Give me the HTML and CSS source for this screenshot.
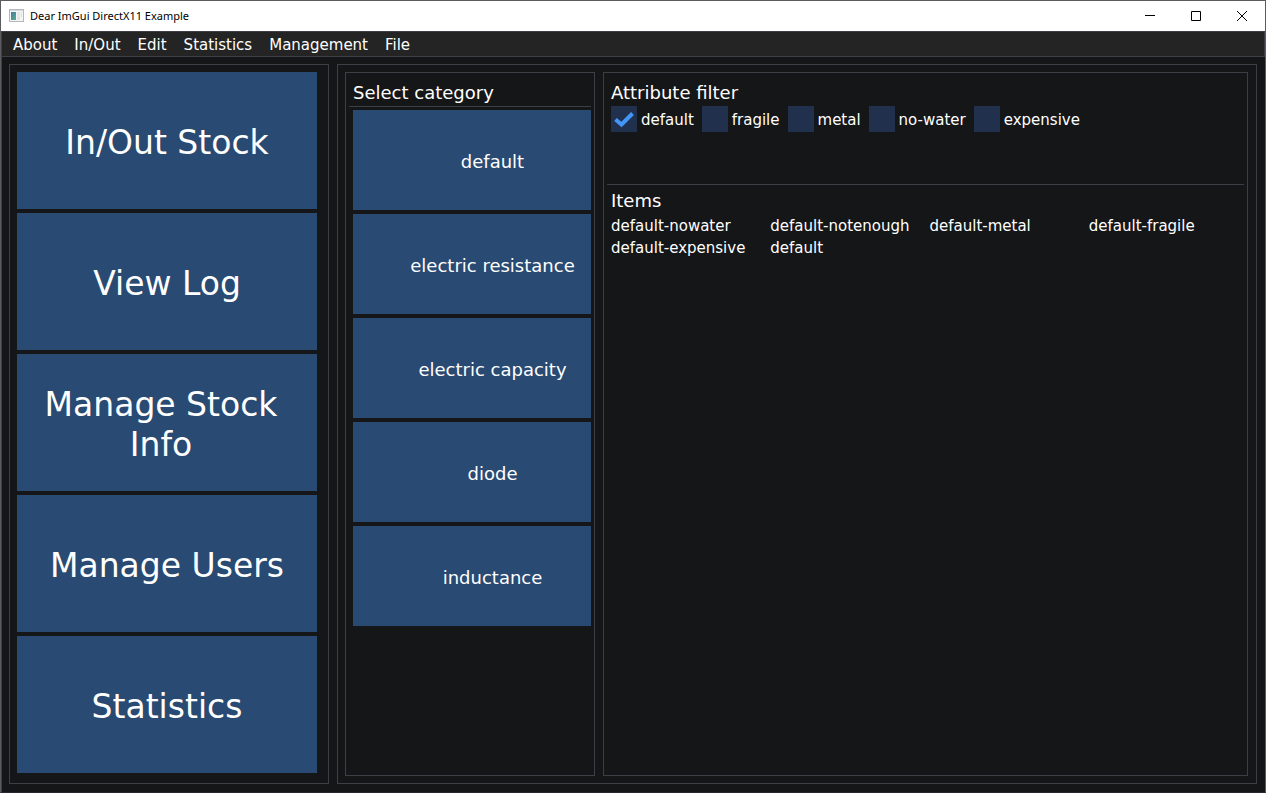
FILE: index.html
```html
<!DOCTYPE html>
<html lang="en">
<head>
<meta charset="utf-8">
<title>Dear ImGui DirectX11 Example</title>
<link rel="stylesheet" href="styles.css">
</head>
<body>
<div class="window">
  <header class="titlebar">
    <svg class="app-icon" width="15" height="13" viewBox="0 0 15 13" aria-hidden="true">
      <defs><linearGradient id="pane" x1="0" y1="0" x2="1" y2="1"><stop offset="0" stop-color="#4a78b0"/><stop offset="1" stop-color="#55b07c"/></linearGradient></defs>
      <rect x="0.5" y="0.5" width="14" height="12" fill="#f4f6f6" stroke="#b4b8bb"/>
      <path d="M1 1.5H14" stroke="#d5d9dc"/>
      <rect x="2" y="3" width="5" height="8" fill="url(#pane)"/>
      <rect x="8" y="3" width="3" height="8" fill="#e2e6e5"/>
      <rect x="12" y="3" width="1" height="5" fill="#dce1e0"/>
    </svg>
    <h1 class="title">Dear ImGui DirectX11 Example</h1>
    <button class="caption" type="button" aria-label="Minimize"><svg width="10" height="10" viewBox="0 0 10 10"><path d="M0 4.5H10"/></svg></button>
    <button class="caption" type="button" aria-label="Maximize"><svg width="10" height="10" viewBox="0 0 10 10"><path d="M.5 .5H9.5V9.5H.5Z"/></svg></button>
    <button class="caption" type="button" aria-label="Close"><svg width="10" height="10" viewBox="0 0 10 10"><path d="M0 0L10 10M10 0L0 10"/></svg></button>
  </header>
  <nav class="menubar">
    <button type="button">About</button>
    <button type="button">In/Out</button>
    <button type="button">Edit</button>
    <button type="button">Statistics</button>
    <button type="button">Management</button>
    <button type="button">File</button>
  </nav>
  <main class="workspace">
    <nav class="panel sidebar">
      <button class="fill" type="button">In/Out Stock</button>
      <button class="fill" type="button">View Log</button>
      <button class="fill wrapped" type="button">Manage Stock Info</button>
      <button class="fill" type="button">Manage Users</button>
      <button class="fill" type="button">Statistics</button>
    </nav>
    <div class="panel content">
      <section class="panel categories">
        <h2 class="heading">Select category</h2>
        <hr class="rule">
        <div class="category-list">
          <button class="fill" type="button">default</button>
          <button class="fill" type="button">electric resistance</button>
          <button class="fill" type="button">electric capacity</button>
          <button class="fill" type="button">diode</button>
          <button class="fill" type="button">inductance</button>
        </div>
      </section>
      <section class="panel stock">
        <div class="filter">
          <h2 class="heading">Attribute filter</h2>
          <div class="checks">
            <label><input type="checkbox" checked><svg class="tick" width="26" height="26" viewBox="0 0 26 26" aria-hidden="true"><path d="M4.500 13.500L10.500 18.500L21.500 7.500"/></svg><span>default</span></label>
            <label><input type="checkbox"><span>fragile</span></label>
            <label><input type="checkbox"><span>metal</span></label>
            <label><input type="checkbox"><span>no-water</span></label>
            <label><input type="checkbox"><span>expensive</span></label>
          </div>
        </div>
        <hr class="rule">
        <h2 class="heading">Items</h2>
        <ul class="items">
          <li>default-nowater</li>
          <li>default-notenough</li>
          <li>default-metal</li>
          <li>default-fragile</li>
          <li>default-expensive</li>
          <li>default</li>
        </ul>
      </section>
    </div>
  </main>
</div>
</body>
</html>
```
FILE: styles.css
```css
* { box-sizing: border-box; }

body {
  margin: 0;
  background: #151618;
  color: #fff;
  font: 15px/22px Verdana, "DejaVu Sans", sans-serif;
}

button {
  border: 0;
  padding: 0;
  color: inherit;
  font: inherit;
}

.window {
  display: flex;
  flex-direction: column;
  min-height: 100vh;
  border: 1px solid #5c5c60;
  border-bottom-color: #25282f;
}

.titlebar {
  display: flex;
  align-items: center;
  height: 30px;
  padding-left: 8px;
  background: #fff;
  color: #000;
}

.app-icon { margin-bottom: 2px; }

.title {
  flex: 1;
  margin: 0 0 0 6px;
  font: 11px/16px "Segoe UI", "Noto Sans", sans-serif;
}

.caption {
  display: grid;
  place-items: center;
  width: 46px;
  height: 28px;
  background: none;
}

.caption path {
  fill: none;
  stroke: #000;
}

.menubar {
  display: flex;
  gap: 17px;
  height: 26px;
  padding: 2px 11px 0;
  border: 1px solid #3e3e46;
  background: #242424;
}

.menubar button { background: none; }

.workspace {
  flex: 1;
  display: flex;
  gap: 8px;
  padding: 7px 8px 8px 7px;
  border-left: 1px solid #3e3e46;
}

.panel { border: 1px solid #3e3e46; }

.sidebar {
  display: flex;
  flex-direction: column;
  gap: 4px;
  width: 320px;
  padding: 7px 11px 10px 7px;
  font-size: 33px;
  line-height: 40px;
}

.fill {
  padding-top: 4px;
  background: #294a72;
  text-align: center;
}

.sidebar .fill {
  flex: 1;
  padding: 4px 20px 0;
}

.sidebar .wrapped { padding-right: 32px; }

.content {
  flex: 1;
  display: flex;
  gap: 8px;
  padding: 7px 8px 7px 7px;
}

.categories {
  width: 250px;
  padding: 9px 3px;
}

.heading {
  margin: 0 4px;
  font-size: 18px;
  font-weight: 400;
  line-height: 22px;
}

.rule {
  height: 1px;
  margin: 2px 0 3px;
  border: 0;
  background: #3e3e46;
}

.category-list {
  display: grid;
  gap: 4px;
  padding-left: 4px;
}

.category-list .fill {
  height: 100px;
  padding-left: 41px;
  font-size: 18px;
}

.stock {
  flex: 1;
  padding: 9px 3px;
}

.filter { min-height: 100px; }

.checks {
  display: flex;
  flex-wrap: wrap;
  gap: 8px;
  padding: 2px 4px;
}

.checks label {
  position: relative;
  display: flex;
  align-items: center;
  gap: 4px;
}

.checks span { padding-top: 2px; }

.checks input {
  appearance: none;
  width: 26px;
  height: 26px;
  margin: 0;
  background: #20304d;
}

.tick {
  position: absolute;
  left: 0;
  top: 0;
  visibility: hidden;
}

.checks input:checked + .tick { visibility: visible; }

.tick path {
  fill: none;
  stroke: #4296fa;
  stroke-width: 4;
}

.stock > .rule { margin: 2px 0 5px; }

.items {
  display: grid;
  grid-template-columns: repeat(4, 1fr);
  column-gap: 4px;
  margin: 3px 0 0 4px;
  padding: 0;
  list-style: none;
}
```
